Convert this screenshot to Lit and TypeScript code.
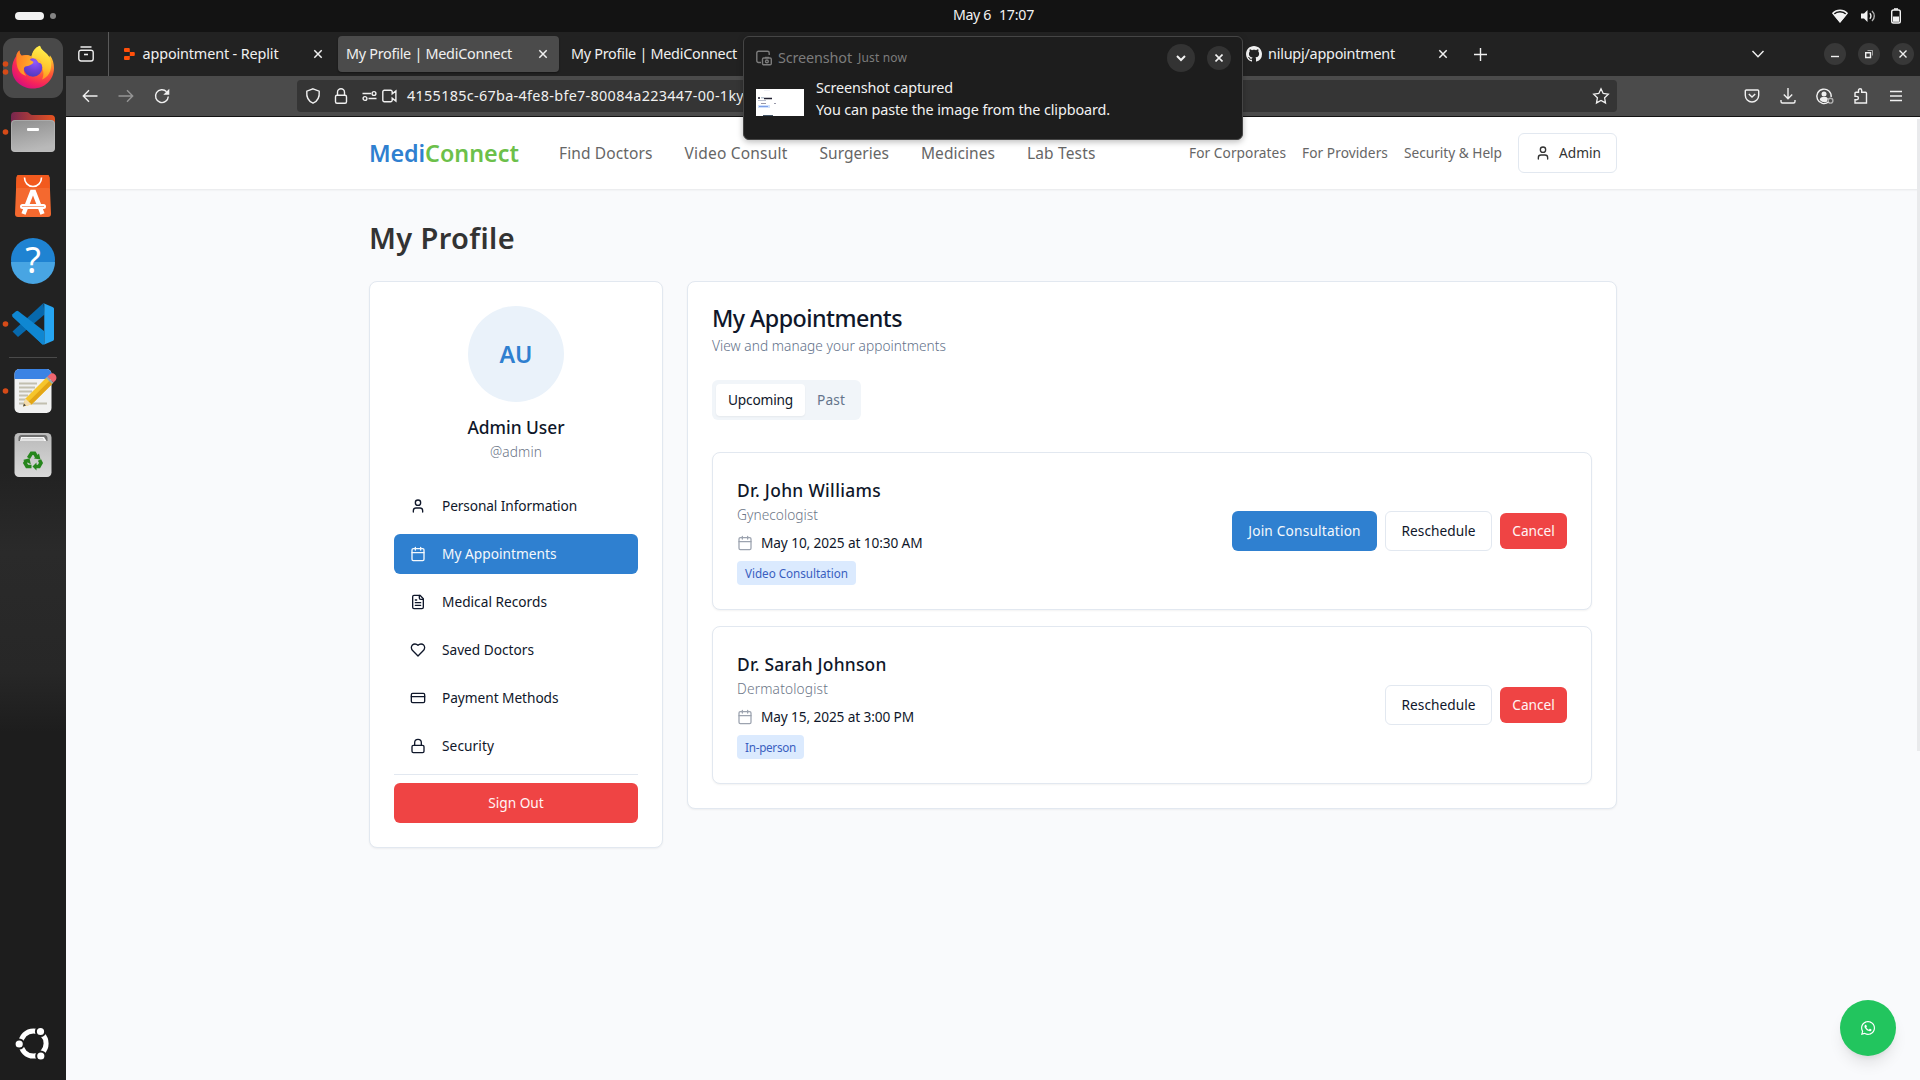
import { LitElement, html, css, svg, nothing } from "lit";
import { customElement, property } from "lit/decorators.js";

/** A single line of text, tracked so that it takes exactly `w` pixels. */
@customElement("fit-text")
class FitText extends LitElement {
  static styles = css`
    :host { display: inline-block; white-space: nowrap; flex: none; }
    .t { display: inline-block; }
  `;
  @property({ type: Number }) w = 0;
  @property() text = "";
  render() {
    return html`<span class="t">${this.text}</span>`;
  }
  updated() {
    const el = this.renderRoot.querySelector(".t") as HTMLElement;
    el.style.letterSpacing = "0px";
    const gap = (this.w - el.getBoundingClientRect().width) / this.text.length;
    el.style.letterSpacing = gap.toFixed(3) + "px";
  }
}

const fit = (text: string, w: number, cls = "") => html`<fit-text class=${cls} .text=${text} .w=${w}></fit-text>`;

const paths: Record<string, unknown> = {
  user: svg`<path d="M19 21v-2a4 4 0 0 0-4-4H9a4 4 0 0 0-4 4v2"/><circle cx="12" cy="7" r="4"/>`,
  calendar: svg`<path d="M8 2v4M16 2v4"/><rect width="18" height="18" x="3" y="4" rx="2"/><path d="M3 10h18"/>`,
  file: svg`<path d="M15 2H6a2 2 0 0 0-2 2v16a2 2 0 0 0 2 2h12a2 2 0 0 0 2-2V7Z"/><path d="M14 2v4a2 2 0 0 0 2 2h4M10 9H8M16 13H8M16 17H8"/>`,
  heart: svg`<path d="M19 14c1.49-1.46 3-3.21 3-5.5A5.5 5.5 0 0 0 16.5 3c-1.76 0-3 .5-4.5 2-1.5-1.5-2.74-2-4.5-2A5.5 5.5 0 0 0 2 8.5c0 2.3 1.5 4.05 3 5.5l7 7Z"/>`,
  card: svg`<rect width="20" height="14" x="2" y="5" rx="2"/><path d="M2 10h20"/>`,
  lock: svg`<rect width="18" height="11" x="3" y="11" rx="2"/><path d="M7 11V7a5 5 0 0 1 10 0v4"/>`,
};
const lucide = (name: string) => html`<svg class="lucide" viewBox="0 0 24 24" width="16" height="16">${paths[name]}</svg>`;
const glyph = (w: number, h: number, body: unknown, cls = "") =>
  html`<svg class="glyph ${cls}" width=${w} height=${h} viewBox="0 0 ${w} ${h}">${body}</svg>`;

const close = () => glyph(10, 10, svg`<path d="M1.300 1.300l7.400 7.400M8.700 1.300L1.300 8.700" stroke-width="1.500"/>`);

/* ------------------------------------------------------------------ dock */
@customElement("side-dock")
class SideDock extends LitElement {
  static styles = css`
    :host { display: flex; flex-direction: column; width: 66px; padding-top: 4px; box-sizing: border-box;
      background: linear-gradient(#222 0, #222 440px, #2a2a2a 520px, #272727 640px, #1d1d1d 700px, #1d1d1d 100%); }
    svg { display: block; flex: none; }
    .sep { height: 1px; width: 48px; margin: 1px 9px; background: #4a4a4a; flex: none; }
    .grow { flex: 1; }
    .dot { fill: #d64b18; }
    .q { font: 36px "Noto Sans", sans-serif; fill: #fff; text-anchor: middle; }
  `;
  render() {
    const item = (body: unknown, dots: number[] = []) => html`<svg width="66" height="64" viewBox="0 0 66 64">
      ${body}${dots.map((y) => svg`<circle class="dot" cx="5.500" cy=${y} r="2.800"/>`)}</svg>`;
    return html`
      ${item(svg`
        <defs>
          <radialGradient id="fa" cx=".78" cy=".1" r="1"><stop offset="0" stop-color="#fff44f"/><stop offset=".32" stop-color="#ffb52e"/><stop offset=".58" stop-color="#ff5a36"/><stop offset=".82" stop-color="#f5225c"/><stop offset="1" stop-color="#d6107c"/></radialGradient>
          <radialGradient id="fb" cx=".6" cy=".2" r=".9"><stop offset="0" stop-color="#9059ff"/><stop offset=".5" stop-color="#7040d8"/><stop offset="1" stop-color="#453ab8"/></radialGradient>
          <linearGradient id="fc" x1=".6" y1="0" x2=".4" y2="1"><stop offset="0" stop-color="#fff44f"/><stop offset=".6" stop-color="#ffc52e"/><stop offset="1" stop-color="#ff8a1f"/></linearGradient>
          <linearGradient id="fd" x1="0" y1="0" x2="1" y2=".3"><stop offset="0" stop-color="#ff7a22"/><stop offset="1" stop-color="#ffae2b"/></linearGradient>
        </defs>
        <rect x="3" y="2" width="60" height="60" rx="11" fill="#494949"/>
        <path d="M12 33c0-5 1.600-9 4.500-13.500.2-2 1.400-3.800 3-5 0 2.500.7 4 2.200 5.200 3-1 6.800-.9 9.800.8 1-5 4-9.500 8.500-10.800 1 4 4.500 5.800 7.500 9 .7.800 1.200 1.700 1.600 2.600.6-.5.800-1.200.8-2C53 23 54 28 54 32c0 12-9.500 20.500-21 20.500S12 44.500 12 33z" fill="url(#fa)"/>
        <path d="M31.500 20.500c1-5 4-9.500 8.500-10.800 1 4 4.500 5.800 7.500 9C51 22.500 52 29 50.500 34c-1.500 5-5 8.500-8.500 9.500 2-3.500 2-9-.5-13-2.500-4-7-5-10-10z" fill="url(#fc)"/>
        <circle cx="33" cy="31.500" r="9.300" fill="url(#fb)"/>
        <path d="M16.500 19.500c.2-2 1.400-3.800 3-5 0 2.500.7 4 2.200 5.200 3.500-1 7.500-.5 9.800 1.300-.4 1-1 2-1.500 3 1.500.6 2.700 1.200 3.600 2-1 2.500-4 3.700-7.100 4.200-1.800.3-2.500 1.300-2.700 2.800-.3 2.500.8 5 2.500 6.700-6-1-10.800-6.500-9.800-20.200z" fill="url(#fd)"/>
        <path d="M34 22c4 .2 8 3 9.200 8-1.400-2.200-2.800-3-4.600-3.300C37.500 25 36 23 34 22z" fill="#ffbf35"/>`, [28, 36])}
      ${item(svg`
        <defs><linearGradient id="ga" x1="0" x2="1"><stop offset="0" stop-color="#77264f"/><stop offset="1" stop-color="#e65320"/></linearGradient>
        <linearGradient id="gb" x1="0" y1="0" x2=".3" y2="1"><stop offset="0" stop-color="#8d8d8d"/><stop offset="1" stop-color="#b9b9b9"/></linearGradient></defs>
        <path d="M11 16a4 4 0 0 1 4-4h12c2 0 3 3 5 3h19a4 4 0 0 1 4 4v10H11z" fill="url(#ga)"/>
        <rect x="11" y="20" width="44" height="32" rx="4" fill="url(#gb)"/>
        <rect x="11.500" y="20.500" width="43" height="31" rx="3.500" fill="none" stroke="#bdbdbd" stroke-opacity=".5"/>
        <rect x="27" y="28" width="12" height="3" rx="1" fill="#fff"/>`, [32])}
      ${item(svg`
        <path d="M19 11h28a2.500 2.500 0 0 1 2.500 2.400L51 50a3 3 0 0 1-3 3H18a3 3 0 0 1-3-3l1.500-36.600A2.500 2.500 0 0 1 19 11z" fill="#f4692f"/>
        <path d="M19 11h28a2.500 2.500 0 0 1 2.500 2.400l.4 10.600H16l.5-10.600A2.500 2.500 0 0 1 19 11z" fill="#f25a1e"/>
        <path d="M24.500 13.500c0 5 3.500 9 8.500 9s8.500-4 8.500-9" fill="none" stroke="#fff" stroke-width="1.600"/>
        <path d="M23.500 50L32 28h2L42.500 50" fill="none" stroke="#fff" stroke-width="4.400"/>
        <rect x="20" y="40" width="26" height="5" rx="2.500" fill="#fff"/>
        <path d="M22 42.500h22" stroke="#f4692f" stroke-width=".6"/>`)}
      ${item(svg`
        <circle cx="33" cy="32" r="22" fill="#1f83d2"/><path d="M11 34h44a22 22 0 0 1-44 0z" fill="#48a5e3"/>
        <text class="q" x="33" y="45">?</text>`)}
      ${item(svg`
        <path d="M12.500 39.500l31-28.500 1 11.500-26.500 22.500z" fill="#0769ad"/>
        <path d="M12.500 24.800L17 21.500l27 20.500-1 11z" fill="#0f87d2"/>
        <path d="M12.500 24.500a2 2 0 0 1 0-2.300l3.500-3a2 2 0 0 1 2.400 0L44 39v13.500l-2-.5z" fill="#0f87d2"/>
        <path d="M43 11l9.500 4c1 .5 1.500 1 1.500 2v30c0 1-.5 1.700-1.500 2L43 53c1-.5 1.300-1.200 1.300-2V13c0-1-.3-1.500-1.300-2z" fill="#26a5f2"/>`, [32])}
      <div class="sep"></div>
      ${item(svg`
        <rect x="14.500" y="10" width="37" height="44" rx="5" fill="#f1f1f1"/>
        <path d="M14.500 20v-5a5 5 0 0 1 5-5h27a5 5 0 0 1 5 5v5z" fill="#3a83e4"/>
        <path d="M19 24.500h18M19 28.500h16M19 32.500h13M19 36.500h9M19 40.500h7M19 44.500h28" stroke="#c2bfb0" stroke-width="1.800"/>
        <path d="M23 47.500l2.500-8 21-21 6 6-21 21z" fill="#f6c52c"/>
        <path d="M28.500 42.800l21-21 3 3-21 20.800z" fill="#e3a516"/>
        <path d="M23 47.500l2.500-8 6 6z" fill="#f3dcb0"/><path d="M23 47.500l1-3 2 2z" fill="#444"/>
        <path d="M46 19l6 6 1.500-1.500-6-6z" fill="#9aa"/><path d="M47.500 17.500l2.300-2.300c2.200-1.800 4.300-.8 5.500.6s1.700 3.500.4 5.500l-2.200 2.200z" fill="#ee6570"/>`, [32])}
      ${item(svg`
        <defs><linearGradient id="ta" x1="0" y1="0" x2="0" y2="1"><stop offset="0" stop-color="#b9b9b9"/><stop offset="1" stop-color="#d9d9d9"/></linearGradient></defs>
        <rect x="14.500" y="10" width="37" height="44" rx="4.500" fill="url(#ta)"/>
        <path d="M18.500 18v-2.500c0-2 1-3.500 3-3.500h23c2 0 3 1.500 3 3.500V18z" fill="#6e6e6e"/>
        <path d="M20 18l1-4h23l2.500 4z" fill="#f7f7f7"/><path d="M22 15.500h21M21 17h23" stroke="#b5b5b5" stroke-width=".6"/>
        <g fill="none" stroke="#26861c" stroke-width="3.600">
          <path d="M28.500 35l3-4.800h3l2.200 3.800"/><path d="M39.500 37l1.500 3-2 3.500h-4"/><path d="M31.500 43.500h-4.500l-2-3.500 1.500-2.500"/>
        </g>
        <g fill="#26861c"><path d="M34 35.500l6.500 1-1.500-6z"/><path d="M36.500 39.500v8l-4-4z"/><path d="M23 37l6.500-1.800 1.300 6z"/></g>`)}
      <div class="grow"></div>
      <svg width="66" height="74" viewBox="0 0 66 74">
        <circle cx="33.500" cy="37.500" r="12.600" fill="none" stroke="#fff" stroke-width="5"/>
        <g stroke="#1d1d1d" stroke-width="2" fill="#fff"><circle cx="19.200" cy="38" r="4.600"/><circle cx="40.500" cy="25.500" r="4.600"/><circle cx="40.800" cy="50" r="4.600"/></g>
      </svg>`;
  }
}

/* --------------------------------------------------------------- browser */
@customElement("browser-chrome")
class BrowserChrome extends LitElement {
  static styles = css`
    :host { display: block; color: #f0f0f0; font: 14.4px/20px "Noto Sans", sans-serif; flex: none; }
    .glyph { display: block; flex: none; fill: none; stroke: currentColor; stroke-width: 1.4; overflow: visible; }
    .solid { fill: currentColor; stroke: none; }
    .tabs { height: 44px; background: #222; display: flex; align-items: center; box-sizing: border-box; }
    .view { width: 42px; height: 44px; border-right: 1px solid #5a5a5a; display: flex; align-items: center; justify-content: center; padding-right: 2px; box-sizing: border-box; flex: 0 0 43px; }
    .strip { display: flex; gap: 4px; margin-left: 4px; }
    .tab { width: 221px; height: 36px; border-radius: 4px; box-sizing: border-box; padding: 0 11px 0 8px; display: flex; align-items: center; }
    .tab .glyph:first-child { margin-right: 6px; }
    .tab:first-child { padding-left: 9.5px; }
    .tab fit-text { margin-right: auto; }
    .on { background: #4b4b4b; box-shadow: 0 1px 2px #0006; }
    .plus { margin-left: 15px; }
    .down { margin-left: auto; margin-right: 60px; }
    .win { display: flex; gap: 12px; padding-right: 6px; }
    .win div { width: 22px; height: 22px; border-radius: 50%; background: #383838; display: flex; align-items: center; justify-content: center; }
    .bar { height: 41px; background: #4b4b4b; border-bottom: 1px solid #141414; box-sizing: border-box; display: flex; align-items: center; padding: 0 16px; }
    .nav { display: flex; align-items: center; gap: 20px; width: 215px; }
    .dim { opacity: .45; }
    .url { width: 1320px; height: 32px; background: #353535; border-radius: 4px; display: flex; align-items: center; box-sizing: border-box; padding: 0 8px; }
    .url fit-text { margin-left: 9px; margin-right: auto; }
    .shield { margin-right: 12px; } .lk { margin-right: 14px; } .perm { margin-right: 5px; }
    .tools { margin-left: auto; display: flex; gap: 20px; align-items: center; }
  `;
  render() {
    return html`
      <div class="tabs">
        <div class="view">${glyph(16, 16, svg`<path d="M2.500 1h11M3 4.200h10a2.200 2.200 0 0 1 2.200 2.200v6.400A2.200 2.200 0 0 1 13 15H3a2.200 2.200 0 0 1-2.200-2.200V6.400A2.200 2.200 0 0 1 3 4.200z"/><path d="M6 8.500h4" stroke-width="1.600"/>`)}</div>
        <div class="strip">
          <div class="tab">
            ${glyph(14, 16, svg`<path fill="#ff4f0a" stroke="none" d="M2 2h3.800a1 1 0 0 1 1 1v3h-4.800a1 1 0 0 1-1-1V3a1 1 0 0 1 1-1zM6.800 6h4a1 1 0 0 1 1 1v2a1 1 0 0 1-1 1h-4zM2 10h4.800v3a1 1 0 0 1-1 1H2a1 1 0 0 1-1-1v-2a1 1 0 0 1 1-1z"/>`)}
            ${fit("appointment - Replit", 136)}${close()}
          </div>
          <div class="tab on">${fit("My Profile | MediConnect", 166)}${close()}</div>
          <div class="tab">${fit("My Profile | MediConnect", 166)}${close()}</div>
          <div class="tab"></div>
          <div class="tab"></div>
          <div class="tab">
            ${glyph(16, 16, svg`<path d="M8 0C3.580 0 0 3.580 0 8c0 3.540 2.290 6.530 5.470 7.590.4.070.55-.17.55-.38 0-.19-.01-.82-.01-1.490-2.010.37-2.530-.49-2.690-.94-.09-.23-.48-.94-.82-1.130-.28-.15-.68-.52-.01-.53.630-.01 1.080.58 1.230.82.72 1.210 1.870.87 2.330.66.070-.52.28-.87.51-1.070-1.780-.2-3.640-.89-3.640-3.950 0-.87.31-1.590.82-2.150-.08-.2-.36-1.020.08-2.120 0 0 .67-.21 2.200.82.64-.18 1.320-.27 2-.27.68 0 1.360.09 2 .27 1.530-1.040 2.200-.82 2.200-.82.44 1.100.16 1.920.08 2.120.51.56.82 1.270.82 2.150 0 3.070-1.870 3.750-3.650 3.950.29.25.54.73.54 1.480 0 1.070-.01 1.930-.01 2.200 0 .21.15.46.55.38A8.013 8.013 0 0 0 16 8c0-4.420-3.580-8-8-8z"/>`, "solid")}
            ${fit("nilupj/appointment", 127)}${close()}
          </div>
        </div>
        <div class="plus">${glyph(13, 13, svg`<path d="M6.500 0v13M0 6.500h13"/>`)}</div>
        <div class="down">${glyph(12, 8, svg`<path d="M0.500 1L6 6.800 11.500 1"/>`)}</div>
        <div class="win">
          <div>${glyph(8, 8, svg`<path d="M0 6.500h8"/>`)}</div>
          <div>${glyph(8, 8, svg`<path d="M.7 2.700h4.800v4.800H.7z" /><path d="M2.500.5h5v5" stroke-width=".8" opacity=".7"/>`)}</div>
          <div>${glyph(8, 8, svg`<path d="M.5.5l7 7M7.500.5l-7 7"/>`)}</div>
        </div>
      </div>
      <div class="bar">
        <div class="nav">
          ${glyph(16, 16, svg`<path d="M15.500 8H1.500M7 2.300L1.300 8 7 13.700"/>`)}
          ${glyph(16, 16, svg`<path d="M.5 8h14M9 2.300L14.700 8 9 13.700"/>`, "dim")}
          ${glyph(16, 16, svg`<path d="M14.300 8.500A6.400 6.400 0 1 1 12.600 3.800"/><path d="M15.300.8v6h-6z" fill="currentColor" stroke="none"/>`)}
        </div>
        <div class="url">
          ${glyph(16, 16, svg`<path d="M8 .8l6.200 2.400c.5 5.300-1.200 9.800-6.200 12-5-2.200-6.700-6.700-6.200-12z"/>`, "shield")}
          ${glyph(16, 16, svg`<rect x="2.500" y="7.300" width="11" height="8" rx="1.500"/><path d="M4.500 7V4.300a3.500 3.500 0 0 1 7 0V7"/>`, "lk")}
          ${glyph(14, 16, svg`<path d="M-.5 5.500h8.500M5.500 10.500h8" stroke-width="1.300"/><circle cx="11" cy="5.500" r="1.900"/><circle cx="2" cy="10.500" r="1.900"/>`, "perm")}
          ${glyph(16, 16, svg`<path d="M10.200 12.200a1.500 1.500 0 0 1-1.500 1.500H2.300a1.500 1.500 0 0 1-1.500-1.500V3.800a1.500 1.500 0 0 1 1.500-1.500h6.400a1.500 1.500 0 0 1 1.500 1.500v2l3.700-2.800V13l-3.700-2.800z"/>`)}
          ${fit("4155185c-67ba-4fe8-bfe7-80084a223447-00-1ky", 337)}
          ${glyph(16, 16, svg`<path d="M8 .8l2.200 4.700 5.100.7-3.700 3.600.9 5.100L8 12.400 3.500 14.900l.9-5.100L.7 6.200l5.100-.7z" stroke-width="1.300"/>`)}
        </div>
        <div class="tools">
          ${glyph(16, 16, svg`<path d="M2.300 2h11.400c.6 0 1 .4 1 1v4.300a6.700 6.700 0 0 1-13.400 0V3c0-.6.400-1 1-1z"/><path d="M4.800 6L8 9.100 11.200 6"/>`)}
          ${glyph(16, 16, svg`<path d="M8 0v10.500M3.800 6.600L8 10.700l4.200-4.100M1 12v1.500C1 14.300 1.700 15 2.500 15h11c.8 0 1.500-.7 1.500-1.500V12"/>`)}
          ${glyph(16, 16, svg`<path d="M12.500 14A7.200 7.200 0 1 1 15.200 9"/><circle cx="8" cy="5.900" r="2.500" fill="currentColor" stroke="none"/><path d="M3.800 12c.3-2.200 1.300-3 3-3h2.400c1.400 0 2.300.6 2.700 2-1 1-1 2-.9 2.800a7 7 0 0 1-7.200-1.800z" fill="currentColor" stroke="none"/><circle cx="14.500" cy="12.700" r="2.400" opacity=".6"/>`)}
          ${glyph(16, 16, svg`<path d="M6.500 3.500V2.300a1.600 1.600 0 0 1 3.200 0v1.900H13.500a1 1 0 0 1 1 1V15H3v-3.200h1.700a1.600 1.600 0 0 0 0-3.400H3V5.200a1 1 0 0 1 1-1H6.500z"/>`)}
          ${glyph(16, 16, svg`<path d="M2 3.500h12M2 8h12M2 12.500h12"/>`)}
        </div>
      </div>`;
  }
}

/* ---------------------------------------------------------- notification */
@customElement("toast-note")
class ToastNote extends LitElement {
  static styles = css`
    :host { display: block; box-sizing: border-box; width: 500px; height: 104px; background: #1d1d1d; border: 1px solid #454545; border-radius: 6px;
      box-shadow: 0 2px 6px #0004; padding: 7px 11px 0 12px; color: #f2f2f2; font: 14.4px/22px "Noto Sans", sans-serif; }
    .glyph { display: block; flex: none; fill: none; stroke: currentColor; stroke-width: 1.4; }
    .head { display: flex; align-items: center; height: 28px; color: #7c7c7c; }
    .app { margin: 0 6px; }
    .when { font-size: 12px; }
    .r { width: 24px; height: 24px; border-radius: 50%; background: #333; color: #f2f2f2; display: flex; align-items: center; justify-content: center; }
    .big { width: 28px; height: 28px; margin-left: auto; margin-right: 12px; }
    .body { display: flex; align-items: center; padding-top: 6px; }
    .thumb { background: #fff; margin-right: 12px; margin-top: 6px; display: block; }
    .lines { display: flex; flex-direction: column; margin-top: -1px; }
  `;
  render() {
    return html`
      <div class="head">
        ${glyph(16, 16, svg`<path d="M5 12.500H2.500c-1 0-1.700-.7-1.700-1.700V3c0-1 .7-1.700 1.700-1.700h9c1 0 1.700.7 1.700 1.700v2"/><rect x="6.500" y="8" width="8.800" height="6.800" rx="1.200"/><path d="M9 7.500h4"/><circle cx="10.900" cy="11.400" r="1.400"/>`)}
        ${fit("Screenshot", 74, "app")}${fit("Just now", 49, "when")}
        <div class="r big">${glyph(10, 8, svg`<path d="M1 2l4 4 4-4" stroke-width="2"/>`)}</div>
        <div class="r">${glyph(8, 8, svg`<path d="M.5.5l7 7M7.500.5l-7 7" stroke-width="1.600"/>`)}</div>
      </div>
      <div class="body">
        <svg class="thumb" width="48" height="27" viewBox="0 0 48 27">
          <path d="M8 1.500h6" stroke="#eef0f6"/><path d="M2 9h2M8 9.500h8" stroke="#223" stroke-width="1.500"/><path d="M5 8.800h3" stroke="#9ab"/>
          <path d="M2 11.500h8" stroke="#b9bfd0"/><path d="M5 14.500h5M18 14.500h2" stroke="#99a"/><path d="M2 17.500h12" stroke="#cfe0fb" stroke-width="3"/><path d="M3 17.500h9" stroke="#7d9fe8"/><path d="M7 26.500h10" stroke="#456"/>
        </svg>
        <div class="lines">${fit("Screenshot captured", 137)}${fit("You can paste the image from the clipboard.", 294)}</div>
      </div>`;
  }
}

/* ---------------------------------------------------------- page content */
const menu: [string, string, number][] = [
  ["user", "Personal Information", 135],
  ["calendar", "My Appointments", 114.5],
  ["file", "Medical Records", 105],
  ["heart", "Saved Doctors", 92],
  ["card", "Payment Methods", 116.5],
  ["lock", "Security", 52],
];
const visits = [
  { name: "Dr. John Williams", nw: 144, field: "Gynecologist", fw: 81, when: "May 10, 2025 at 10:30 AM", ww: 161.5, kind: "Video Consultation", kw: 103, join: true },
  { name: "Dr. Sarah Johnson", nw: 149.5, field: "Dermatologist", fw: 91, when: "May 15, 2025 at 3:00 PM", ww: 153, kind: "In-person", kw: 51, join: false },
];

@customElement("medi-page")
class MediPage extends LitElement {
  static styles = css`
    :host { display: block; background: #f9fafc; color: #0f172a; font: 13.700px/20px "Noto Sans", sans-serif; position: relative; }
    * { box-sizing: border-box; }
    .lucide { display: block; flex: none; fill: none; stroke: currentColor; stroke-width: 2; stroke-linecap: round; stroke-linejoin: round; }
    .top { background: #fff; box-shadow: 0 1px 2px #00000014; height: 72px; }
    .wrap { width: 1280px; margin: 0 auto; padding: 0 16px; }
    .row { display: flex; align-items: center; height: 72px; }
    .logo { font-size: 23.300px; font-weight: 600; line-height: 32px; display: flex; margin-right: 40px; }
    .medi { color: #2f80d0; } .conn { color: #6cc04a; }
    .links { display: flex; gap: 32px; font-size: 15.500px; color: #666; }
    .small { display: flex; gap: 16px; color: #666; margin-left: auto; margin-right: 16px; }
    .admin { width: 99px; height: 40px; border: 1px solid #e2e8f0; border-radius: 6px; display: flex; align-items: center; padding-left: 16px; gap: 8px; color: #333; font-weight: 450; background: #fff; }
    h1 { margin: 0; padding: 31px 0 25px; font-size: 29px; line-height: 36px; font-weight: 600; color: #333; }
    .grid { display: grid; grid-template-columns: 294px 930px; gap: 24px; align-items: start; }
    .card { background: #fff; border: 1px solid #e2e8f0; border-radius: 8px; padding: 24px; box-shadow: 0 1px 2px #0000000d; }
    .me { display: flex; flex-direction: column; align-items: center; margin-bottom: 24px; }
    .avatar { width: 96px; height: 96px; border-radius: 50%; background: #eaf2fa; color: #2f80d0; font-size: 23.300px; font-weight: 600; display: flex; align-items: center; justify-content: center; margin-bottom: 12px; }
    .name { font-size: 17.400px; line-height: 26px; padding-bottom: 2px; font-weight: 550; }
    .muted { color: #6c7687; font-weight: 300; }
    .menu { display: flex; flex-direction: column; gap: 8px; }
    .mi { height: 40px; border-radius: 6px; display: flex; align-items: center; gap: 16px; padding: 0 16px; font-weight: 450; }
    .sel { background: #2f80d0; color: #f4f8fc; font-weight: 400; }
    .rule { height: 1px; background: #e2e8f0; margin-bottom: 0; }
    .out { height: 40px; border-radius: 6px; background: #ef4444; color: #fff4f4; display: flex; align-items: center; justify-content: center; }
    .title { font-size: 23.300px; line-height: 24px; font-weight: 550; display: flex; margin-bottom: 6px; }
    .sub { display: flex; color: #627189; font-weight: 300; margin-bottom: 24px; }
    .seg { width: 149px; height: 40px; background: #f1f5f9; border-radius: 6px; padding: 4px; display: flex; margin-bottom: 32px; color: #64748b; font-weight: 450; }
    .seg div { height: 32px; display: flex; align-items: center; padding: 0 12px; border-radius: 4px; }
    .seg .cur { width: 89px; background: #fff; color: #0f172a; box-shadow: 0 1px 2px #0000000d; }
    .visits { display: flex; flex-direction: column; gap: 16px; }
    .visit { display: flex; justify-content: space-between; align-items: center; height: 158px; }
    .info { display: flex; flex-direction: column; align-items: flex-start; }
    .when { display: flex; gap: 8px; margin: 8px 0; align-items: center; }
    .when .lucide { color: #9ca3af; stroke-width: 1.900; }
    .badge { height: 24px; border-radius: 4px; background: #dbeafe; color: #3a5fc0; font-size: 11.700px; display: flex; align-items: center; padding: 0 8px 1px; }
    .acts { display: flex; gap: 8px; align-items: center; }
    .btn { height: 40px; border-radius: 6px; display: flex; align-items: center; justify-content: center; }
    .join { width: 145px; background: #2f80d0; color: #f4f8fc; }
    .re { width: 107px; border: 1px solid #e2e8f0; font-weight: 450; }
    .no { width: 67px; height: 36px; background: #ef4444; color: #fff4f4; }
    .chat { position: absolute; right: 24px; bottom: 24px; width: 56px; height: 56px; border-radius: 50%; background: #22c55e; display: flex; align-items: center; justify-content: center;
      box-shadow: 0 10px 15px -3px #0000001a, 0 4px 6px -4px #0000001a; }
    .thumbbar { position: absolute; right: 0; top: 2px; width: 3px; height: 632px; background: #e9eaec; }
  `;
  render() {
    return html`
      <header class="top"><div class="wrap row">
        <div class="logo">${fit("Medi", 56, "medi")}${fit("Connect", 94, "conn")}</div>
        <nav class="links">${fit("Find Doctors", 93.5)}${fit("Video Consult", 103)}${fit("Surgeries", 69.5)}${fit("Medicines", 74)}${fit("Lab Tests", 68.5)}</nav>
        <nav class="small">${fit("For Corporates", 97)}${fit("For Providers", 86)}${fit("Security & Help", 98)}</nav>
        <div class="admin">${lucide("user")}${fit("Admin", 42)}</div>
      </div></header>
      <main class="wrap">
        <h1>${fit("My Profile", 146)}</h1>
        <div class="grid">
          <section class="card">
            <div class="me">
              <div class="avatar">${fit("AU", 33)}</div>
              ${fit("Admin User", 97, "name")}${fit("@admin", 52, "muted")}
            </div>
            <div class="menu">
              ${menu.map(([icon, text, w], i) => html`<div class="mi ${i === 1 ? "sel" : ""}">${lucide(icon)}${fit(text, w)}</div>`)}
              <div class="rule"></div>
              <div class="out">${fit("Sign Out", 55.5)}</div>
            </div>
          </section>
          <section class="card">
            <div class="title">${fit("My Appointments", 190)}</div>
            <div class="sub">${fit("View and manage your appointments", 234)}</div>
            <div class="seg"><div class="cur">${fit("Upcoming", 65)}</div><div>${fit("Past", 28)}</div></div>
            <div class="visits">
              ${visits.map((v) => html`<article class="card visit">
                <div class="info">
                  ${fit(v.name, v.nw, "name")}${fit(v.field, v.fw, "muted")}
                  <div class="when">${lucide("calendar")}${fit(v.when, v.ww)}</div>
                  <div class="badge">${fit(v.kind, v.kw)}</div>
                </div>
                <div class="acts">
                  ${v.join ? html`<div class="btn join">${fit("Join Consultation", 112.5)}</div>` : nothing}
                  <div class="btn re">${fit("Reschedule", 74)}</div>
                  <div class="btn no">${fit("Cancel", 42.5)}</div>
                </div>
              </article>`)}
            </div>
          </section>
        </div>
      </main>
      <div class="chat"><svg width="14" height="16" viewBox="0 0 448 512" fill="#fff"><path d="M380.9 97.1C339 55.1 283.2 32 223.9 32c-122.4 0-222 99.6-222 222 0 39.1 10.2 77.3 29.6 111L0 480l117.7-30.9c32.4 17.7 68.9 27 106.1 27h.1c122.3 0 224.1-99.6 224.1-222 0-59.3-25.2-115-67.1-157zm-157 341.6c-33.2 0-65.7-8.9-94-25.7l-6.7-4-69.8 18.3L72 359.2l-4.4-7c-18.5-29.4-28.2-63.3-28.2-98.2 0-101.7 82.8-184.5 184.6-184.5 49.3 0 95.6 19.2 130.4 54.1 34.8 34.9 56.2 81.2 56.1 130.5 0 101.8-84.9 184.6-186.6 184.6zm101.2-138.2c-5.5-2.8-32.8-16.2-37.9-18-5.1-1.9-8.8-2.8-12.5 2.8-3.7 5.6-14.3 18-17.6 21.8-3.2 3.7-6.5 4.2-12 1.4-32.6-16.3-54-29.1-75.5-66-5.700-9.800 5.700-9.100 16.300-30.300 1.800-3.700.9-6.900-.5-9.700-1.400-2.800-12.500-30.100-17.100-41.200-4.500-10.800-9.100-9.300-12.500-9.500-3.200-.2-6.900-.2-10.600-.2-3.700 0-9.700 1.400-14.800 6.900-5.100 5.600-19.400 19-19.400 46.300 0 27.300 19.900 53.700 22.600 57.400 2.800 3.700 39.100 59.700 94.800 83.800 35.200 15.200 49 16.500 66.600 13.900 10.700-1.600 32.800-13.400 37.400-26.400 4.600-13 4.600-24.100 3.200-26.400-1.300-2.500-5-3.900-10.500-6.600z"/></svg></div>
      <div class="thumbbar"></div>`;
  }
}

/* --------------------------------------------------------------- desktop */
@customElement("app-root")
class AppRoot extends LitElement {
  static styles = css`
    :host { display: block; width: 1920px; height: 1080px; overflow: hidden; position: relative; font-family: "Noto Sans", sans-serif; }
    .desk { display: grid; grid-template: 32px 1048px / 66px 1854px; }
    .sys { grid-column: 1 / 3; background: #131313; color: #f2f2f2; display: grid; grid-template-columns: 1fr auto 1fr; align-items: center; font-size: 14.200px; line-height: 20px; padding: 0 16px 0 15px; }
    .ws { display: flex; gap: 6px; align-items: center; }
    .pill { width: 29px; height: 8px; border-radius: 4px; background: #f2f2f2; }
    .dot { width: 6px; height: 6px; border-radius: 50%; background: #848484; }
    .clock { display: flex; gap: 8px; padding: 0 0 2px 68px; }
    .tray { display: flex; gap: 12px; justify-content: flex-end; }
    .tray svg { display: block; fill: none; stroke: #f2f2f2; stroke-width: 1.400; }
    .win { display: flex; flex-direction: column; }
    medi-page { flex: 1; }
    toast-note { position: absolute; left: 743px; top: 36px; }
  `;
  render() {
    return html`
      <div class="desk">
        <div class="sys">
          <div class="ws"><div class="pill"></div><div class="dot"></div></div>
          <div class="clock">${fit("May 6", 38)}${fit("17:07", 35)}</div>
          <div class="tray">
            <svg width="16" height="16" viewBox="0 0 16 16"><path d="M.8 5.200a10.200 10.200 0 0 1 14.400 0L8 13.800z"/><path d="M2.800 7.300a7.500 7.500 0 0 1 10.400 0L8 13.500z" fill="#f2f2f2"/></svg>
            <svg width="16" height="16" viewBox="0 0 16 16"><path d="M1 5.500h3L7.500 2v12L4 10.500H1z" fill="#f2f2f2" stroke="none"/><path d="M9.800 5.300a3.800 3.800 0 0 1 0 5.400" /><path d="M12 3a6.600 6.600 0 0 1 0 10" opacity=".7"/></svg>
            <svg width="16" height="16" viewBox="0 0 16 16"><rect x="3.700" y="2" width="8.600" height="13" rx="1.800"/><path d="M6 1h4" stroke-width="1.600"/><rect x="5" y="8.500" width="6" height="5.300" fill="#f2f2f2" stroke="none"/></svg>
          </div>
        </div>
        <side-dock></side-dock>
        <div class="win"><browser-chrome></browser-chrome><medi-page></medi-page></div>
      </div>
      <toast-note></toast-note>`;
  }
}
